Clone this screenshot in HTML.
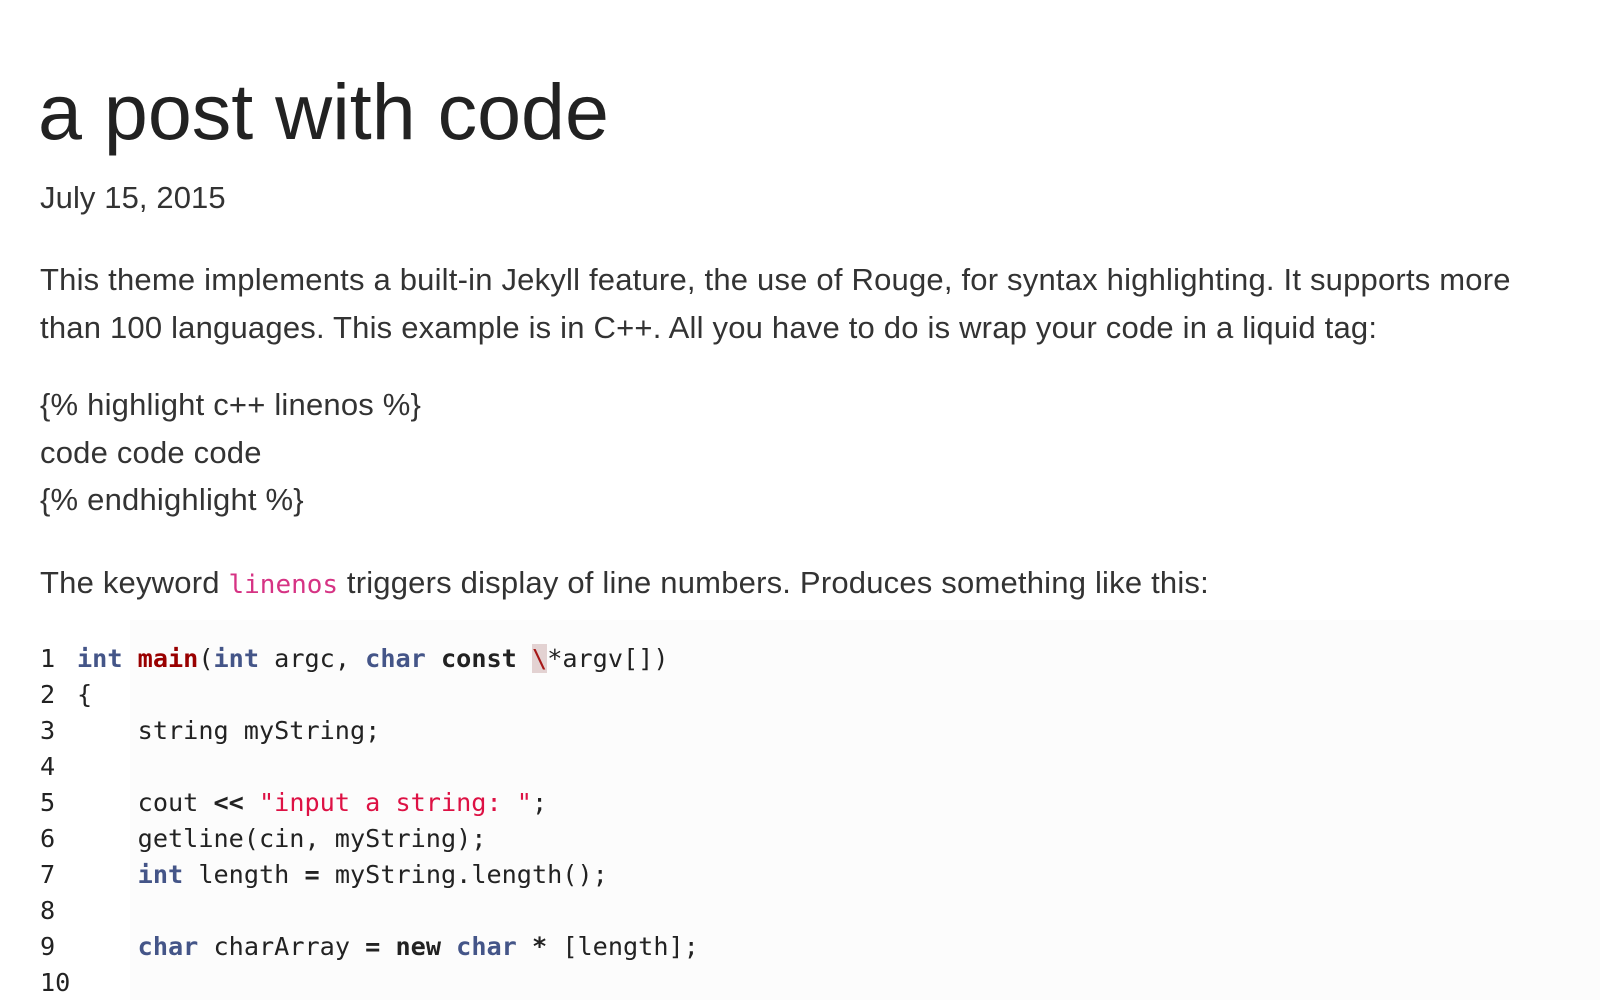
<!DOCTYPE html>
<html><head><meta charset="utf-8"><style>
body{margin:0;background:#fff;color:#222;font-family:"Liberation Sans",sans-serif;}
h1{position:absolute;left:38px;top:66px;margin:0;font-weight:normal;font-size:79px;letter-spacing:0;color:#222;white-space:nowrap}
.d{position:absolute;left:40px;top:180px;font-size:31px;letter-spacing:0.1px;color:#333}
p{position:absolute;left:40px;margin:0;font-size:31px;letter-spacing:0.2px;line-height:47.5px;color:#333;white-space:nowrap}
code.k{font-family:"DejaVu Sans Mono",monospace;color:#d63384;font-size:26px;letter-spacing:0}
.code{position:absolute;left:130px;top:620px;width:1470px;height:380px;background:#fcfcfc}
pre{position:absolute;margin:0;top:641px;font-family:"DejaVu Sans Mono",monospace;font-size:25.2px;line-height:36px;color:#222}
pre div{height:36px}
.n{left:40px}.c{left:77px}
.t{color:#445588;font-weight:bold}.f{color:#990000;font-weight:bold}.b{font-weight:bold}.s{color:#dd1144}.e{background:#e3d2d2;color:#a61717}
</style></head><body>
<h1>a post with code</h1>
<div class="d">July 15, 2015</div>
<p style="top:256px">This theme implements a built-in Jekyll feature, the use of Rouge, for syntax highlighting. It supports more<br>than 100 languages. This example is in C++. All you have to do is wrap your code in a liquid tag:</p>
<p style="top:381px">{% highlight c++ linenos %}<br>code code code<br>{% endhighlight %}</p>
<p style="top:559px">The keyword <code class="k">linenos</code> triggers display of line numbers. Produces something like this:</p>
<div class="code"></div>
<pre class="n"><div>1</div><div>2</div><div>3</div><div>4</div><div>5</div><div>6</div><div>7</div><div>8</div><div>9</div><div>10</div></pre>
<pre class="c"><div><span class="t">int</span> <span class="f">main</span>(<span class="t">int</span> argc, <span class="t">char</span> <span class="b">const</span> <span class="e">\</span>*argv[])</div><div>{</div><div>    string myString;</div><div></div><div>    cout <span class="b">&lt;&lt;</span> <span class="s">"input a string: "</span>;</div><div>    getline(cin, myString);</div><div>    <span class="t">int</span> length <span class="b">=</span> myString.length();</div><div></div><div>    <span class="t">char</span> charArray <span class="b">=</span> <span class="b">new</span> <span class="t">char</span> <span class="b">*</span> [length];</div></pre>
</body></html>
